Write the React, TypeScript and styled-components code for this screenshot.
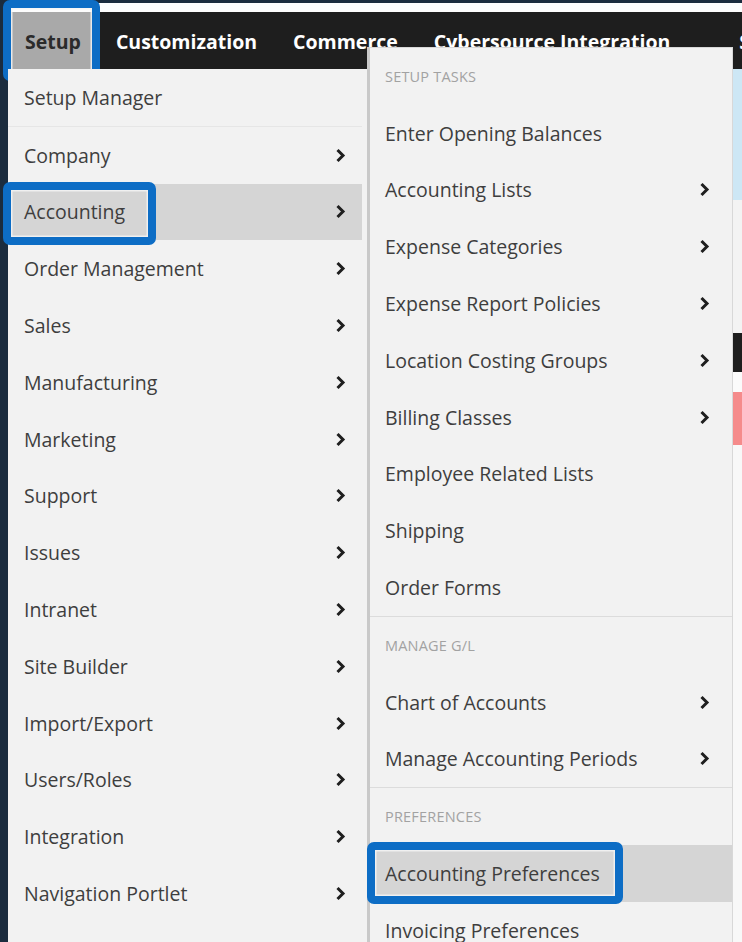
import React from "react";
import styled, { createGlobalStyle } from "styled-components";

const Global = createGlobalStyle`
  * { box-sizing: border-box; }
  html, body { margin: 0; padding: 0; background: #1b2c3e; overflow: hidden; }
  #root { width: 742px; height: 942px; overflow: hidden; }
`;

const Screen = styled.div`
  width: 742px;
  height: 942px;
  padding: 3px 0 0 8px;
  overflow: hidden;
  font-family: "Open Sans", "Noto Sans", sans-serif;
`;

const Page = styled.div`
  position: relative;
  width: 734px;
  height: 939px;
  display: flex;
  flex-direction: column;
  background: #f8f8f8;
`;

const TopStrip = styled.div`
  flex: none;
  height: 9px;
  background: #fdfdfd;
`;

const NavBar = styled.nav`
  flex: none;
  height: 57px;
  display: flex;
  align-items: stretch;
  background: #1e1e1e;
  white-space: nowrap;
`;

const NavTab = styled.div<{ $active?: boolean; $spaced?: boolean }>`
  position: relative;
  display: flex;
  align-items: center;
  padding: 1px ${(p) => (p.$active ? "17px" : "18px")} 0;
  margin-left: ${(p) => (p.$spaced ? "33px" : "0")};
  font-size: 19.5px;
  font-weight: 700;
  color: ${(p) => (p.$active ? "#2b2b2b" : "#ffffff")};
  background: ${(p) => (p.$active ? "#a9a9a9" : "transparent")};
`;

const Banner = styled.div`
  flex: none;
  height: 131px;
  background: #cde7f5;
`;

const Strip = styled.div<{ $h: number; $bg: string }>`
  flex: none;
  height: ${(p) => p.$h}px;
  background: ${(p) => p.$bg};
`;

const Dropdown = styled.div`
  position: absolute;
  top: 66px;
  left: 0;
  display: flex;
  align-items: flex-start;
`;

const LeftMenu = styled.ul`
  list-style: none;
  margin: 0;
  padding: 0 5px 0 0;
  width: 359px;
  background: #f2f2f2;
`;

const MenuRow = styled.li<{ $active?: boolean; $divided?: boolean }>`
  position: relative;
  height: ${(p) => (p.$divided ? "57.8px" : "56.8px")};
  display: flex;
  align-items: center;
  justify-content: space-between;
  padding: 0 16px;
  font-size: 19.5px;
  color: #3e3e3e;
  background: ${(p) => (p.$active ? "#d5d5d5" : "transparent")};
  border-bottom: ${(p) => (p.$divided ? "1px solid #e6e6e6" : "none")};
`;

const SubMenu = styled.ul`
  position: absolute;
  top: -22px;
  left: 359px;
  width: 366px;
  list-style: none;
  margin: 0;
  padding: 0;
  background: #f2f2f2;
  border-top: 1px solid #d8d8d8;
  border-left: 3px solid #c9c9c9;
  border-right: 1px solid #d8d8d8;
`;

const SubHeader = styled.li<{ $divided?: boolean }>`
  height: ${(p) => (p.$divided ? "57.8px" : "56.8px")};
  display: flex;
  align-items: center;
  padding: 0 15px;
  font-size: 14.5px;
  letter-spacing: 0.2px;
  text-transform: uppercase;
  color: #a2a2a2;
  border-top: ${(p) => (p.$divided ? "1px solid #dcdcdc" : "none")};
`;

const SubRow = styled.li<{ $active?: boolean }>`
  position: relative;
  height: 56.8px;
  display: flex;
  align-items: center;
  justify-content: space-between;
  padding: 0 22px 0 15px;
  font-size: 19.5px;
  color: #3e3e3e;
  background: ${(p) => (p.$active ? "#d5d5d5" : "transparent")};
`;

const Callout = styled.span<{ $top: number; $left: number; $w: number; $bottom: number }>`
  position: absolute;
  top: ${(p) => p.$top}px;
  left: ${(p) => p.$left}px;
  bottom: ${(p) => p.$bottom}px;
  width: ${(p) => p.$w}px;
  border: 8.5px solid #0d6dc5;
  border-radius: 7px;
  box-shadow: inset 0 0 0 1.5px rgba(245, 245, 245, 0.85);
  pointer-events: none;
`;

const Chevron = () => (
  <svg width="11" height="15" viewBox="0 0 11 15" aria-hidden="true">
    <path d="M2.5 2 L8 7.5 L2.5 13" fill="none" stroke="#1f1f1f" strokeWidth="3" />
  </svg>
);

const leftItems: { label: string; arrow: boolean }[] = [
  { label: "Company", arrow: true },
  { label: "Accounting", arrow: true },
  { label: "Order Management", arrow: true },
  { label: "Sales", arrow: true },
  { label: "Manufacturing", arrow: true },
  { label: "Marketing", arrow: true },
  { label: "Support", arrow: true },
  { label: "Issues", arrow: true },
  { label: "Intranet", arrow: true },
  { label: "Site Builder", arrow: true },
  { label: "Import/Export", arrow: true },
  { label: "Users/Roles", arrow: true },
  { label: "Integration", arrow: true },
  { label: "Navigation Portlet", arrow: true },
  { label: "Search", arrow: true },
];

type SubEntry = { header?: string; label?: string; arrow?: boolean };

const subItems: SubEntry[] = [
  { header: "Setup Tasks" },
  { label: "Enter Opening Balances" },
  { label: "Accounting Lists", arrow: true },
  { label: "Expense Categories", arrow: true },
  { label: "Expense Report Policies", arrow: true },
  { label: "Location Costing Groups", arrow: true },
  { label: "Billing Classes", arrow: true },
  { label: "Employee Related Lists" },
  { label: "Shipping" },
  { label: "Order Forms" },
  { header: "Manage G/L" },
  { label: "Chart of Accounts", arrow: true },
  { label: "Manage Accounting Periods", arrow: true },
  { header: "Preferences" },
  { label: "Accounting Preferences" },
  { label: "Invoicing Preferences" },
];

export default function App() {
  return (
    <>
      <Global />
      <Screen>
        <Page>
          <TopStrip />
          <NavBar>
            <NavTab $active>
              Setup
              <Callout $top={-12} $left={-5} $w={97} $bottom={-12} />
            </NavTab>
            <NavTab>Customization</NavTab>
            <NavTab>Commerce</NavTab>
            <NavTab>Cybersource Integration</NavTab>
            <NavTab $spaced>SuiteApps</NavTab>
          </NavBar>
          <Banner />
          <Strip $h={133} $bg="#f3f3f3" />
          <Strip $h={39} $bg="#1e1e1e" />
          <Strip $h={20} $bg="#fbfbfb" />
          <Strip $h={53} $bg="#f58b8b" />

          <Dropdown>
            <LeftMenu>
              <MenuRow $divided>Setup Manager</MenuRow>
              {leftItems.map((it) => (
                <MenuRow key={it.label} $active={it.label === "Accounting"}>
                  <span>{it.label}</span>
                  {it.arrow && <Chevron />}
                  {it.label === "Accounting" && (
                    <Callout $top={-1.5} $left={-5} $w={153} $bottom={-4.5} />
                  )}
                </MenuRow>
              ))}
            </LeftMenu>
            <SubMenu>
              {subItems.map((it, i) =>
                it.header ? (
                  <SubHeader key={it.header} $divided={i > 0}>
                    {it.header}
                  </SubHeader>
                ) : (
                  <SubRow key={it.label} $active={it.label === "Accounting Preferences"}>
                    <span>{it.label}</span>
                    {it.arrow && <Chevron />}
                    {it.label === "Accounting Preferences" && (
                      <Callout $top={-3} $left={-3} $w={256} $bottom={-2} />
                    )}
                  </SubRow>
                )
              )}
            </SubMenu>
          </Dropdown>
        </Page>
      </Screen>
    </>
  );
}
